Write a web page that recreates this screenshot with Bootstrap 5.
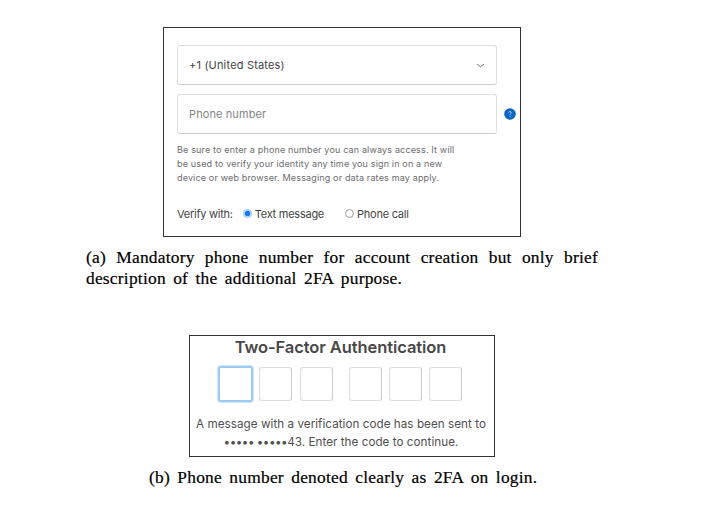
<!DOCTYPE html>
<html lang="en">
<head>
<meta charset="utf-8">
<meta name="viewport" content="width=device-width, initial-scale=1">
<title>Two-factor authentication figures</title>
<link href="https://cdn.jsdelivr.net/npm/bootstrap@5.3.0/dist/css/bootstrap.min.css" rel="stylesheet">
<style>
body{font-family:Inter,"Liberation Sans",sans-serif;color:#444;height:521px;overflow:hidden}
.signup{width:358px;height:210px;margin:27px 0 0 163px;border:1.5px solid #333;padding:17px 0 0 13px}
.field{width:320px;height:40px;border:1px solid #ddd;border-bottom-color:#ccc;border-radius:3px;padding:0 11px 0 11px;font-size:11px;line-height:38px;letter-spacing:.18px}
.phone-row{margin-top:9px}
.phone-row .field{color:#858585;letter-spacing:.1px}
.help{margin-left:7px}
.hint{margin-top:9px;font-size:9px;line-height:14.2px;color:#6c6c6c;letter-spacing:.16px}
.verify{margin-top:21px;font-size:11px;line-height:14px;letter-spacing:-.25px}
.verify .form-check-input{width:9px;height:9px;margin:0 3px 0 0;border-color:#999}
.verify .form-check-input:checked{background:radial-gradient(circle,#1677f2 0 2.3px,#d8e9ff 3.2px);border-color:#8dc0fb}
.first-option{margin-left:10px}
.next-option{margin-left:21px}
.cap{font-family:"Liberation Serif","Times New Roman",serif;color:#000;font-size:17.4px;line-height:21px;letter-spacing:.23px;word-spacing:2.8px;-webkit-text-stroke:.2px #000}
.cap-a{width:512px;margin:10px 0 0 86px}
.cap-a div:first-child{text-align-last:justify;word-spacing:0}
.login{width:306px;height:122px;margin:46px 0 0 189px;border:1.5px solid #333;text-align:center}
.login h1{font-size:16.5px;line-height:20px;font-weight:600;margin:1px 0 0;color:#484848;letter-spacing:-.08px;padding-right:3px}
.codes{margin:9px 0 0 28px;height:36px}
.digit{width:33px;height:34px;border:1px solid #ddd;border-right-color:#ccc;border-radius:3px;margin-right:7.2px}
.digit.active{width:35px;height:36px;border:2px solid #9dc9f5;box-shadow:0 0 1px 1px #cce4fb;margin-right:6.4px}
.digit.group-end{margin-right:16px}
.msg{margin-top:13px;font-size:11.7px;line-height:18px;color:#505050;letter-spacing:.03px;padding-right:2px}
.dots{letter-spacing:-.5px}
.cap-b{margin:10px 0 0 149px}
</style>
</head>
<body class="bg-white">
<section class="signup">
  <div class="field d-flex justify-content-between align-items-center"><span>+1 (United States)</span>
    <svg width="9" height="5" viewBox="0 0 9 5" fill="none" stroke="#777"><path d="M1 1 4.5 3.7 8 1"/></svg></div>
  <div class="phone-row d-flex align-items-center"><div class="field"><span>Phone number</span></div>
    <svg class="help" width="12" height="12" viewBox="0 0 12 12"><circle cx="6" cy="6" r="5.8" fill="#0866c6"/><path d="M4.7 4.6C4.8 3 7.4 3.2 7.2 4.8 7.1 5.7 6 5.7 6 6.9M6 7.8v1" fill="none" stroke="#b5d7f5"/></svg></div>
  <div class="hint text-nowrap"><div>Be sure to enter a phone number you can always access. It will</div><div>be used to verify your identity any time you sign in on a new</div><div>device or web browser. Messaging or data rates may apply.</div></div>
  <div class="verify d-flex align-items-center text-nowrap"><span>Verify with:</span>
    <label class="first-option d-flex align-items-center"><input class="form-check-input" type="radio" name="v" checked>Text message</label>
    <label class="next-option d-flex align-items-center"><input class="form-check-input" type="radio" name="v">Phone call</label></div>
</section>
<div class="cap cap-a"><div>(a) Mandatory phone number for account creation but only brief</div><div>description of the additional 2FA purpose.</div></div>
<section class="login">
  <h1>Two-Factor Authentication</h1>
  <div class="codes d-flex align-items-center"><div class="digit active"></div><div class="digit"></div><div class="digit group-end"></div><div class="digit"></div><div class="digit"></div><div class="digit"></div></div>
  <div class="msg text-nowrap"><div>A message with a verification code has been sent to</div><div><span class="dots">••••• •••••</span>43. Enter the code to continue.</div></div>
</section>
<div class="cap cap-b">(b) Phone number denoted clearly as 2FA on login.</div>
<script src="https://cdn.jsdelivr.net/npm/bootstrap@5.3.0/dist/js/bootstrap.bundle.min.js"></script>
</body>
</html>
